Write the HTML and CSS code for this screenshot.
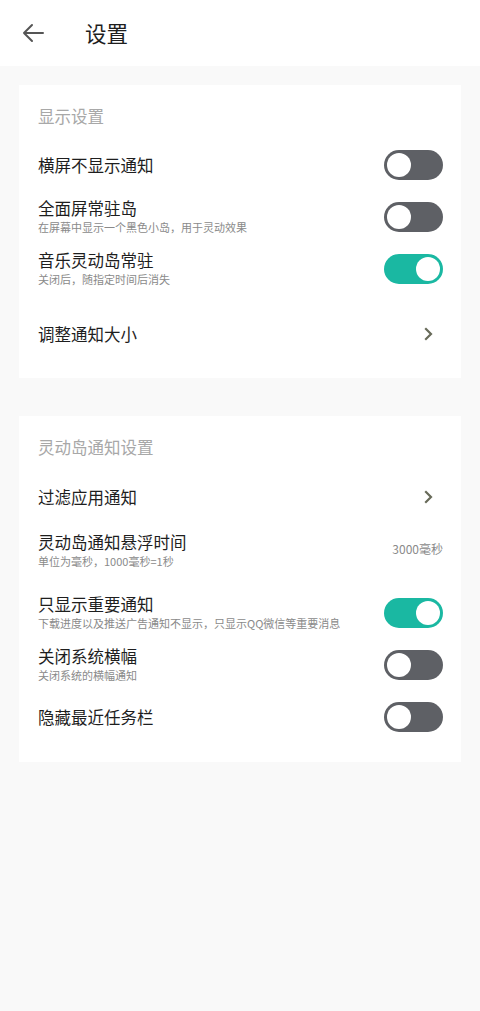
FILE: index.html
```html
<!DOCTYPE html>
<html lang="zh">
<head>
<meta charset="utf-8">
<title>设置</title>
<link rel="stylesheet" href="styles.css">
</head>
<body>
<header class="topbar">
  <svg class="back" width="22" height="20" viewBox="0 0 22 20"><path d="M21 10H2M10 2L2 10l8 8" fill="none" stroke="#555" stroke-width="2" stroke-linecap="round" stroke-linejoin="round"/></svg>
  <h1 class="page-title">设置</h1>
</header>
<main class="content">
  <section class="card">
    <div class="section-title">显示设置</div>
    <div class="row">
      <div class="texts"><div class="title">横屏不显示通知</div></div>
      <span class="toggle"></span>
    </div>
    <div class="row">
      <div class="texts"><div class="title">全面屏常驻岛</div><div class="sub">在屏幕中显示一个黑色小岛，用于灵动效果</div></div>
      <span class="toggle"></span>
    </div>
    <div class="row">
      <div class="texts"><div class="title">音乐灵动岛常驻</div><div class="sub">关闭后，随指定时间后消失</div></div>
      <span class="toggle on"></span>
    </div>
    <div class="row row-tall">
      <div class="texts"><div class="title">调整通知大小</div></div>
      <svg class="chev" width="10" height="14" viewBox="0 0 10 14"><path d="M2 2l5 5-5 5" fill="none" stroke="#686b5a" stroke-width="2.2" stroke-linecap="square"/></svg>
    </div>
  </section>
  <section class="card card-2">
    <div class="section-title">灵动岛通知设置</div>
    <div class="row row-link">
      <div class="texts"><div class="title">过滤应用通知</div></div>
      <svg class="chev" width="10" height="14" viewBox="0 0 10 14"><path d="M2 2l5 5-5 5" fill="none" stroke="#686b5a" stroke-width="2.2" stroke-linecap="square"/></svg>
    </div>
    <div class="row row-value">
      <div class="texts"><div class="title">灵动岛通知悬浮时间</div><div class="sub">单位为毫秒，1000毫秒=1秒</div></div>
      <span class="value">3000毫秒</span>
    </div>
    <div class="row">
      <div class="texts"><div class="title">只显示重要通知</div><div class="sub">下载进度以及推送广告通知不显示，只显示QQ微信等重要消息</div></div>
      <span class="toggle on"></span>
    </div>
    <div class="row">
      <div class="texts"><div class="title">关闭系统横幅</div><div class="sub">关闭系统的横幅通知</div></div>
      <span class="toggle"></span>
    </div>
    <div class="row">
      <div class="texts"><div class="title">隐藏最近任务栏</div></div>
      <span class="toggle"></span>
    </div>
  </section>
</main>
</body>
</html>
```

FILE: styles.css
```css
* { box-sizing: border-box; }
html, body { margin: 0; padding: 0; }
body {
  width: 480px;
  min-height: 1011px;
  background: #f9f9f9;
  font-family: "Noto Sans CJK SC", "Noto Sans", "Liberation Sans", sans-serif;
  color: #1e1e1e;
}
.topbar {
  height: 66px;
  background: #fff;
  display: flex;
  align-items: center;
  padding-left: 22px;
}
.back { display: block; margin-right: 41px; margin-top: 0; }
.page-title {
  margin: 0;
  font-size: 21.5px;
  font-weight: 400;
  line-height: 30px;
  color: #1e1e1e;
}
.content {
  padding: 19px 19px 0;
  display: flex;
  flex-direction: column;
  gap: 38px;
}
.card {
  background: #fff;
  padding: 0 18px 5px 19px;
}
.card-2 { padding-bottom: 19px; }
.section-title {
  height: 54px;
  padding-top: 20px;
  font-size: 16.5px;
  line-height: 22px;
  color: #a8a8a8;
}
.row {
  height: 52px;
  display: flex;
  align-items: center;
  justify-content: space-between;
}
.row-tall { height: 78px; }
.row-link { height: 54px; }
.row-value { height: 63px; align-items: flex-start; padding-top: 8px; }
.texts { display: flex; flex-direction: column; }
.title {
  font-size: 16.5px;
  line-height: 21px;
  color: #1e1e1e;
}
.sub {
  font-size: 11px;
  line-height: 17px;
  color: #8a8a8a;
}
.value {
  font-size: 12px;
  line-height: 18px;
  color: #8a8a8a;
  margin-top: 8px;
}
.chev { display: block; margin-right: 9px; }
.toggle {
  position: relative;
  width: 59px;
  height: 30px;
  border-radius: 15px;
  background: #5e6065;
  flex: none;
}
.toggle::after {
  content: "";
  position: absolute;
  top: 3px;
  left: 3px;
  width: 24px;
  height: 24px;
  border-radius: 50%;
  background: #fff;
}
.toggle.on { background: #1ab8a2; }
.toggle.on::after { left: auto; right: 3px; }
```
